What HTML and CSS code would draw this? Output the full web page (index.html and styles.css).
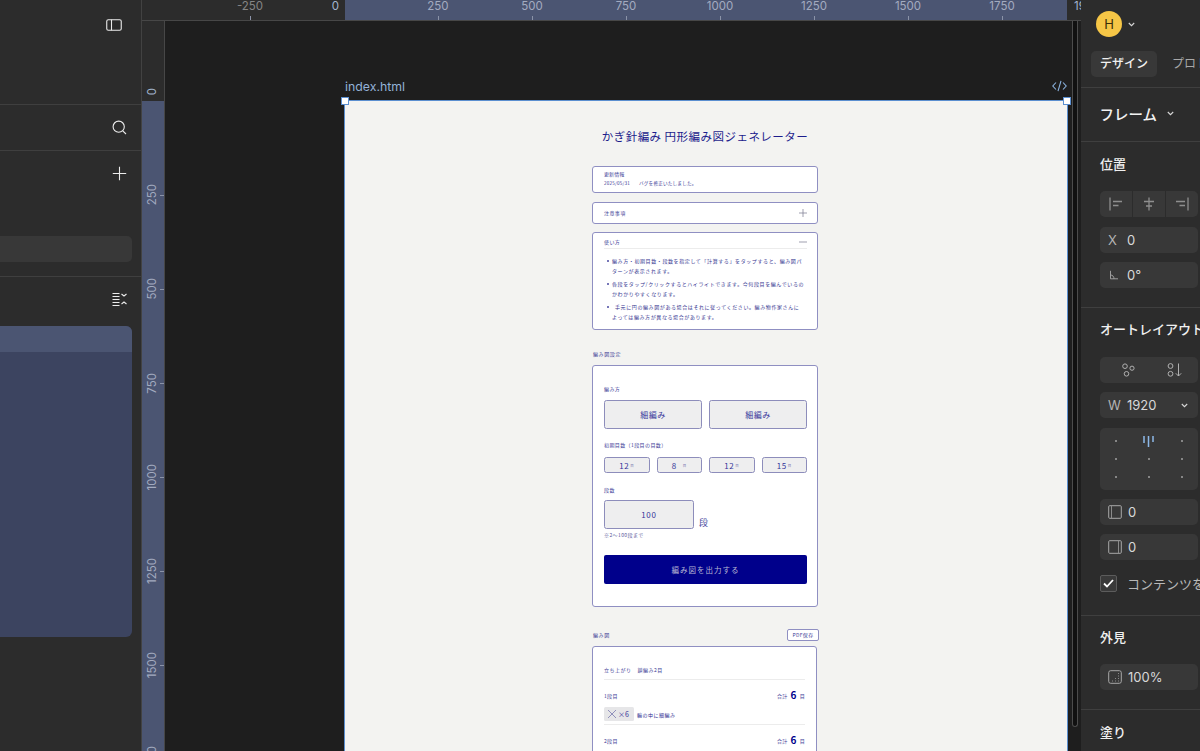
FILE: index.html
```html
<!DOCTYPE html>
<html lang="ja">
<head>
<meta charset="utf-8">
<title>index.html</title>
<link rel="stylesheet" href="styles.css">
</head>
<body>
<div class="app">
  <aside class="left">
    <section class="l-top">
      <svg class="ico ico-side" width="16" height="12" viewBox="0 0 16 12"><rect x=".75" y=".75" width="14.5" height="10.5" rx="1.6"/><path d="M5.5 .75v10.5"/></svg>
    </section>
    <section class="l-search">
      <svg class="ico" width="15" height="15" viewBox="0 0 15 15"><circle cx="6.7" cy="6.7" r="5.6"/><path d="M10.8 10.8l3.2 3.2"/></svg>
    </section>
    <section class="l-pages">
      <svg class="ico" width="15" height="15" viewBox="0 0 15 15"><path d="M7.5 .8v13.4M.8 7.5h13.4"/></svg>
      <div class="l-pagerow"></div>
    </section>
    <section class="l-layers">
      <div class="l-tool">
        <svg class="ico" width="15" height="15" viewBox="0 0 15 15"><path d="M.5 1.5h7M.5 4.5h7M.5 7.5h7M.5 10.5h7M.5 13.5h7M9.5 2l2.5 2 2.5-2M9.5 12l2.500-2 2.500 2"/></svg>
      </div>
      <div class="l-tree">
        <div class="l-tree-head"></div>
        <div class="l-tree-body"></div>
      </div>
    </section>
  </aside>

  <main class="center">
    <div class="h-ruler">
      <div class="h-band"></div>
      <div class="h-labels">
        <span class="hr-mark tick">-250</span>
        <span class="hr-zero">0</span>
        <span class="hr-mark hr-first tick">250</span>
        <span class="hr-mark tick">500</span>
        <span class="hr-mark tick">750</span>
        <span class="hr-mark tick">1000</span>
        <span class="hr-mark tick">1250</span>
        <span class="hr-mark tick">1500</span>
        <span class="hr-mark tick">1750</span>
        <span class="hr-last">1920</span>
      </div>
    </div>
    <div class="stage">
      <div class="v-ruler">
        <div class="v-band"></div>
        <div class="v-labels">
          <div class="vr-zero"><span>0</span></div>
          <div class="vr-mark vr-first"><span>250</span></div>
          <div class="vr-mark"><span>500</span></div>
          <div class="vr-mark"><span>750</span></div>
          <div class="vr-mark"><span>1000</span></div>
          <div class="vr-mark"><span>1250</span></div>
          <div class="vr-mark"><span>1500</span></div>
          <div class="vr-mark"><span>1750</span></div>
        </div>
      </div>
      <div class="canvas">
        <div class="frame-wrap">
          <div class="frame-label">
            <span>index.html</span>
            <svg class="code-ico" width="15" height="12" viewBox="0 0 15 12"><path d="M4 2.5L.8 6 4 9.5M11 2.5L14.2 6 11 9.5M9 .8L6 11.2"/></svg>
          </div>
          <div class="frame">
            <i class="handle h-tl"></i><i class="handle h-tr"></i>
            <div class="page">
              <h1 class="title">かぎ針編み 円形編み図ジェネレーター</h1>

              <div class="card c-news">
                <p class="tiny news-h">更新情報</p>
                <p class="tiny news-line"><span class="news-date">2025/05/31</span><span>バグを修正いたしました。</span></p>
              </div>

              <div class="card c-note">
                <span class="tiny">注意事項</span>
                <svg class="pm" width="8" height="8" viewBox="0 0 8 8"><path d="M4 0v8M0 4h8"/></svg>
              </div>

              <div class="card c-how">
                <div class="how-head">
                  <span class="tiny">使い方</span>
                  <svg class="pm" width="8" height="8" viewBox="0 0 8 8"><path d="M0 4h8"/></svg>
                </div>
                <ul class="how-list">
                  <li>編み方・初期目数・段数を指定して「計算する」をタップすると、編み図パターンが表示されます。</li>
                  <li>各段をタップ/クリックするとハイライトできます。今何段目を編んでいるのかわかりやすくなります。</li>
                  <li class="li-indent">手元に円の編み図がある場合はそれに従ってください。編み物作家さんによっては編み方が異なる場合があります。</li>
                </ul>
              </div>

              <h2 class="sec-label s-form">編み図設定</h2>
              <div class="card c-form">
                <p class="tiny f-label">編み方</p>
                <div class="two">
                  <div class="opt opt-big">細編み</div>
                  <div class="opt opt-big">細編み</div>
                </div>
                <p class="tiny f-label f-l2">初期目数（1段目の目数）</p>
                <div class="four">
                  <div class="opt opt-sm">12<small>目</small></div>
                  <div class="opt opt-sm">8<small class="wide">目</small></div>
                  <div class="opt opt-sm">12<small>目</small></div>
                  <div class="opt opt-sm">15<small>目</small></div>
                </div>
                <p class="tiny f-label f-l3">段数</p>
                <div class="rows">
                  <div class="opt opt-in">100</div>
                  <span class="rows-unit">段</span>
                </div>
                <p class="tiny f-hint">※2〜100段まで</p>
                <div class="go">編み図を出力する</div>
              </div>

              <div class="res-head">
                <h2 class="sec-label">編み図</h2>
                <span class="pdf">PDF保存</span>
              </div>
              <div class="card c-res">
                <div class="r-up"><span>立ち上がり</span><span>鎖編み2目</span></div>
                <div class="r-row">
                  <div class="r-top"><span class="r-n">1段目</span><span class="r-sum">合計<b>6</b>目</span></div>
                  <div class="r-body">
                    <span class="chip"><svg width="10" height="10" viewBox="0 0 10 10"><path d="M1 1l8 8M9 1l-8 8"/></svg>×6</span>
                    <span class="r-text">輪の中に細編み</span>
                  </div>
                </div>
                <div class="r-row">
                  <div class="r-top"><span class="r-n">2段目</span><span class="r-sum">合計<b>6</b>目</span></div>
                </div>
              </div>
            </div>
          </div>
        </div>
        <div class="scrollbar"></div>
      </div>
    </div>
  </main>

  <aside class="right">
    <section class="r-sec rs-user">
      <span class="avatar">H</span>
      <svg class="chev" width="7" height="5" viewBox="0 0 7 5"><path d="M.8 1l2.700 2.700L6.200 1"/></svg>
    </section>
    <section class="r-sec rs-tabs">
      <span class="tab on">デザイン</span>
      <span class="tab">プロトタイプ</span>
    </section>
    <section class="r-sec rs-frame">
      <span class="frame-name">フレーム</span>
      <svg class="chev" width="7" height="5" viewBox="0 0 7 5"><path d="M.8 1l2.700 2.700L6.200 1"/></svg>
    </section>
    <section class="r-sec rs-pos">
      <h3 class="r-h">位置</h3>
      <div class="seg aligns">
        <span class="seg-c"><svg width="16" height="16" viewBox="0 0 16 16"><path d="M2 1.500v13M5 5.500h9M5 9.500h5.500"/></svg></span>
        <span class="seg-c"><svg width="16" height="16" viewBox="0 0 16 16"><path d="M8 1.500v13M3 5.500h10M5 10h6"/></svg></span>
        <span class="seg-c"><svg width="16" height="16" viewBox="0 0 16 16"><path d="M14 1.500v13M2 5.500h9M5.500 9.500H11"/></svg></span>
      </div>
      <div class="field"><span class="f-k">X</span><span>0</span></div>
      <div class="field"><svg class="f-ico" width="10" height="10" viewBox="0 0 10 10"><path d="M1.500 .8v8h7.500M1.500 5c2 0 3.500 1.500 3.500 3.800"/></svg><span>0°</span></div>
    </section>
    <section class="r-sec rs-auto">
      <h3 class="r-h">オートレイアウト</h3>
      <div class="seg auto-modes">
        <span class="seg-c"><svg width="16" height="14" viewBox="0 0 16 14"><circle cx="5" cy="3.200" r="2.300"/><circle cx="12" cy="5.200" r="2.100"/><circle cx="6.500" cy="10.800" r="2.300"/></svg></span>
        <span class="seg-c"><svg width="16" height="14" viewBox="0 0 16 14"><circle cx="3.500" cy="3" r="2.400"/><circle cx="3.500" cy="10.800" r="2.400"/><path d="M11.500 .5v12.500M8.800 10.300l2.700 2.700 2.700-2.700"/></svg></span>
      </div>
      <div class="field f-w"><span class="f-k">W</span><span class="f-v">1920</span><svg class="chev" width="7" height="5" viewBox="0 0 7 5"><path d="M.8 1l2.700 2.700L6.200 1"/></svg></div>
      <div class="align-grid">
        <i></i>
        <svg class="ag-on" width="13" height="13" viewBox="0 0 13 13"><path d="M2 1v7M6.500 1v11M11 1v6"/></svg>
        <i></i><i></i><i></i><i></i><i></i><i></i><i></i>
      </div>
      <div class="field f-side"><svg class="f-box" width="14" height="14" viewBox="0 0 14 14"><rect x=".7" y=".7" width="12.600" height="12.600" rx="1"/><path class="dim" d="M3.500 1v12"/></svg><span>0</span></div>
      <div class="field f-side"><svg class="f-box" width="14" height="14" viewBox="0 0 14 14"><rect x=".7" y=".7" width="12.600" height="12.600" rx="1"/><path class="dim" d="M10.500 1v12"/></svg><span>0</span></div>
      <div class="check-row">
        <span class="check"><svg width="11" height="9" viewBox="0 0 11 9"><path d="M1 4.500l3 3L10 1"/></svg></span>
        <span class="check-t">コンテンツをクリップ</span>
      </div>
    </section>
    <section class="r-sec rs-look">
      <h3 class="r-h">外見</h3>
      <div class="field"><svg class="f-box" width="14" height="14" viewBox="0 0 14 14"><rect x=".7" y=".7" width="12.600" height="12.600" rx="2"/><path class="dim" d="M4 11h1M7 11h1M10 11h1M7 8.500h1M10 8.500h1M10 6h1M10 3.500h1"/></svg><span>100%</span></div>
    </section>
    <section class="r-sec rs-fill">
      <h3 class="r-h">塗り</h3>
    </section>
  </aside>
</div>
</body>
</html>
```

FILE: styles.css
```css
* { box-sizing: border-box; margin: 0; padding: 0; }
html, body { height: 100%; overflow: hidden; }
body {
  width: 1200px;
  height: 751px;
  background: #1e1e1e;
  font-family: Inter, "Noto Sans CJK JP", sans-serif;
  color: #e6e6e6;
}
.app { display: flex; width: 1200px; height: 751px; overflow: hidden; }
svg { display: block; fill: none; }

/* Left panel */
.left { width: 142px; flex: none; background: #2c2c2c; border-right: 1px solid #424242; display: flex; flex-direction: column; }
.left section { display: flex; flex-direction: column; align-items: flex-end; border-bottom: 1px solid #3f3f3f; padding-right: 14px; }
.ico { stroke: #ececec; stroke-width: 1.100; }
.l-top { height: 105px; padding-top: 19px; }
.l-top .ico-side { margin-right: 5px; }
.l-search { height: 46px; padding-top: 15px; }
.l-pages { height: 126px; padding-top: 15px; }
.l-pagerow { width: 132px; height: 26px; margin-top: 55px; margin-right: -5px; background: #383838; border-radius: 0 5px 5px 0; }
.left .l-layers { flex: 1; border-bottom: 0; padding-top: 15px; }
.l-tool { height: 34px; }
.l-tree { width: 132px; height: 311px; margin-right: -5px; border-radius: 0 6px 6px 0; overflow: hidden; background: #3c4460; }
.l-tree-head { height: 26px; background: #4b5572; }
.l-tree-body { height: 285px; }

/* Center */
.center { width: 939px; flex: none; display: flex; flex-direction: column; overflow: hidden; }
.h-ruler { height: 21px; flex: none; position: relative; background: #2c2c2c; border-bottom: 1px solid #474747; overflow: hidden; }
.h-band { position: absolute; left: 203px; width: 722px; top: 0; bottom: 0; background: #4b5572; }
.h-labels { position: relative; display: flex; height: 20px; padding-left: 61px; font-size: 11.500px; line-height: 12px; color: #8f8f8f; white-space: nowrap; }
.h-labels span { flex: none; }
.hr-mark { width: 94px; text-align: center; position: relative; color: #a3abc0; }
.hr-mark:first-child { color: #858585; }
.hr-zero { width: 48px; padding-right: 6px; text-align: right; color: #a3b6cf; }
.hr-first { margin-left: 46px; }
.hr-last { margin-left: 25px; color: #a3b6cf; }
.tick::after { content: ""; position: absolute; left: 47px; top: 16px; width: 1px; height: 4px; background: #8b93a8; }

.stage { flex: 1; display: flex; min-height: 0; }
.v-ruler { width: 23px; flex: none; position: relative; background: #2c2c2c; border-right: 1px solid #474747; overflow: hidden; }
.v-band { position: absolute; left: 0; right: 0; top: 80px; bottom: 0; background: #4b5572; }
.v-labels { position: relative; display: flex; flex-direction: column; font-size: 11.500px; color: #a3abc0; }
.vr-zero { height: 79px; display: flex; flex-direction: column; justify-content: flex-end; align-items: center; width: 19px; padding-bottom: 5px; color: #a3b6cf; flex: none; }
.vr-zero span, .vr-mark span { writing-mode: vertical-rl; transform: rotate(180deg); line-height: 12px; }
.vr-mark { height: 94px; flex: none; width: 19px; display: flex; align-items: center; justify-content: center; position: relative; }
.vr-mark::after { content: ""; position: absolute; left: 18px; top: 47px; width: 4px; height: 1px; background: #8b93a8; }
.vr-first { margin-top: 48px; }

.canvas { flex: 1; position: relative; background: #1e1e1e; overflow: hidden; }
.frame-wrap { margin-left: 180px; padding-top: 58px; width: 722px; }
.frame-label { height: 22px; display: flex; justify-content: space-between; align-items: flex-start; font-size: 12.300px; line-height: 15px; color: #93b2d8; }
.code-ico { stroke: #8cb4e0; stroke-width: 1.100; margin-top: 1px; }
.frame { position: relative; width: 722px; height: 680px; background: #f3f3f1; box-shadow: 0 0 0 1px #5b8fd0; }
.handle { position: absolute; width: 8px; height: 8px; background: #fff; border: 1px solid #5b8fd0; top: -4px; }
.h-tl { left: -4px; }
.h-tr { right: -4px; }
.scrollbar { position: absolute; left: 907px; top: 0; width: 6px; height: 706px; background: #111; border: 1px solid #4c4c4c; border-top: 0; border-radius: 0 0 3px 3px; }

/* Page */
.page { width: 226px; margin-left: 247px; color: #26268f; font-family: "Noto Sans CJK JP", sans-serif; }
.title { font-size: 11.500px; line-height: 16px; font-weight: 400; text-align: center; letter-spacing: .47px; padding-top: 27px; margin-bottom: 22px; color: #1c1c8c; }
.card { background: #fff; border: 1px solid #8f8fc2; border-radius: 3px; }
.tiny { font-size: 5px; line-height: 8px; letter-spacing: .4px; color: #3a3a95; display: block; }
.c-news { height: 27px; padding: 3px 11px 0; margin-bottom: 9px; }
.news-h { letter-spacing: .1px; }
.news-line { margin-top: 1px; display: flex; gap: 9px; font-size: 4.600px; letter-spacing: .2px; }
.c-note { height: 22px; padding: 0 10px 1px 11px; margin-bottom: 8px; display: flex; justify-content: space-between; align-items: center; }
.pm { stroke: #77778c; stroke-width: .7; }
.c-how { height: 98px; padding: 4px 10px 0 11px; }
.how-head { display: flex; justify-content: space-between; align-items: center; height: 12px; border-bottom: 1px solid #ececec; padding-bottom: 2px; }
.how-list { list-style: none; margin-top: 7px; font-size: 5px; line-height: 10px; letter-spacing: .6px; color: #34348f; }
.how-list li { position: relative; padding-left: 8px; margin-bottom: 3px; }
.how-list li::before { content: ""; position: absolute; left: 3px; top: 4px; width: 2px; height: 2px; background: #4a4aa0; border-radius: 50%; }
.how-list .li-indent { text-indent: 3px; padding-right: 7px; }

.sec-label { font-size: 5px; line-height: 8px; letter-spacing: .6px; font-weight: 400; color: #3a3a95; }
.s-form { margin-top: 20px; margin-bottom: 7px; padding-left: 1px; }
.c-form { height: 242px; padding: 19px 10px 0 11px; }
.f-label { margin-bottom: 7px; }
.two { display: flex; gap: 7px; }
.four { display: flex; gap: 7px; }
.opt { background: #eeeeef; border: 1px solid #8d8dbb; border-radius: 2.500px; display: flex; align-items: center; justify-content: center; color: #35359a; }
.opt-big { flex: 1; height: 29px; font-size: 8px; letter-spacing: .5px; }
.f-l2 { margin-top: 12px; margin-bottom: 8px; }
.opt-sm { flex: 1; height: 16px; font-size: 8px; letter-spacing: .5px; }
.opt-sm small { font-size: 3.500px; margin-left: 1px; color: #7a7ab0; }
.opt-sm small.wide { margin-left: 6px; }
.f-l3 { margin-top: 13px; margin-bottom: 6px; }
.rows { display: flex; align-items: flex-end; gap: 5px; }
.opt-in { width: 90px; height: 29px; font-size: 8px; letter-spacing: .8px; }
.rows-unit { font-size: 9px; line-height: 13px; color: #4c4ca0; }
.f-hint { margin-top: 2px; color: #5a5a9a; }
.go { height: 29px; margin-top: 16px; padding-bottom: 1px; background: #00008b; border-radius: 2px; display: flex; align-items: center; justify-content: center; font-size: 7.500px; letter-spacing: 1px; color: #b9b9d4; }

.res-head { display: flex; justify-content: space-between; align-items: center; height: 12px; margin-top: 22px; margin-bottom: 5px; padding-left: 1px; }
.pdf { font-size: 5px; line-height: 9px; letter-spacing: .3px; width: 32px; height: 12px; text-align: center; background: #fff; border: 1px solid #8f8fc2; border-radius: 2px; margin-right: -1px; color: #3a3a95; }
.c-res { width: 225px; height: 200px; padding: 0 11px; }
.r-up { display: flex; gap: 6px; height: 33px; padding-top: 19px; border-bottom: 1px solid #ececec; font-size: 5px; line-height: 8px; letter-spacing: .5px; color: #3a3a95; }
.r-row { border-bottom: 1px solid #ececec; height: 45px; padding-top: 9px; }
.r-top { display: flex; justify-content: space-between; align-items: center; height: 12px; font-size: 5px; letter-spacing: .3px; color: #3a3a95; }
.r-sum { display: flex; align-items: center; gap: 3px; }
.r-sum b { font-size: 10px; line-height: 10px; font-weight: 700; color: #00008b; }
.r-body { display: flex; align-items: center; gap: 3px; margin-top: 6px; }
.chip { display: flex; align-items: center; gap: 1px; height: 14px; width: 30px; padding-left: 3px; background: #e6e6e8; border-radius: 1.500px; font-size: 7px; color: #35359a; }
.chip svg { stroke: #6a6aa8; stroke-width: .7; }
.r-text { font-size: 5px; letter-spacing: .5px; color: #2a2a8f; }

/* Right panel */
.right { width: 119px; flex: none; background: #2c2c2c; color: #e8e8e8; overflow: hidden; }
.r-sec { padding-left: 19px; border-bottom: 1px solid #3f3f3f; width: 140px; }
.chev { stroke: #d8d8d8; stroke-width: 1.100; }
.rs-user { height: 51px; display: flex; align-items: center; gap: 6px; padding: 0 0 3px 15px; border: 0; }
.avatar { width: 26px; height: 26px; border-radius: 50%; background: #f6c646; color: #3a2d08; display: flex; align-items: center; justify-content: center; font-size: 13px; }
.rs-tabs { height: 37px; display: flex; gap: 6px; padding: 0 0 0 10px; white-space: nowrap; }
.tab { height: 26px; padding: 0 9px; font-size: 12px; line-height: 26px; color: #a8a8a8; border-radius: 5px; }
.tab.on { background: #383838; color: #f0f0f0; font-weight: 500; }
.rs-frame { height: 54px; display: flex; align-items: center; gap: 10px; padding-bottom: 2px; padding-left: 18.500px; }
.frame-name { font-size: 14.500px; font-weight: 500; color: #f2f2f2; }
.r-h { font-size: 13px; line-height: 18px; font-weight: 500; color: #f0f0f0; white-space: nowrap; }
.rs-pos { height: 166px; padding-top: 13px; }
.seg { display: flex; width: 98px; height: 26px; background: #383838; border-radius: 5px; overflow: hidden; }
.seg-c { flex: 1; display: flex; align-items: center; justify-content: center; }
.seg svg { stroke: #8e8e8e; stroke-width: 1.300; }
.aligns { margin-top: 18px; gap: 1px; background: #2c2c2c; }
.aligns .seg-c { background: #383838; }
.field { display: flex; align-items: center; width: 98px; height: 26px; margin-top: 10px; padding-left: 8px; background: #383838; border-radius: 5px; font-size: 13px; color: #d8d8d8; white-space: nowrap; }
.f-k { width: 19px; color: #b4b4b4; font-size: 13px; }
.f-ico { stroke: #a8a8a8; stroke-width: .9; margin-left: 1px; margin-right: 8px; }
.rs-pos .field { margin-top: 9.500px; }
.rs-auto { height: 308px; padding-top: 12px; }
.auto-modes { margin-top: 19px; padding-left: 4px; }
.auto-modes svg { stroke: #b0b0b0; stroke-width: 1; }
.f-w { margin-top: 9px; padding-right: 10px; }
.f-w .f-k { width: 19px; }
.f-w .f-v { flex: 1; }
.align-grid { width: 98px; height: 62px; margin-top: 10px; background: #383838; border-radius: 5px; display: grid; grid-template-columns: repeat(3, 1fr); grid-template-rows: repeat(3, 1fr); align-items: center; justify-items: center; padding: 4px 0; }
.align-grid i { width: 2px; height: 2px; background: #a0a0a0; border-radius: 50%; }
.ag-on { stroke: #8cb8e8; stroke-width: 1.500; }
.f-box { stroke: #a8a8a8; stroke-width: 1; margin-right: 6px; flex: none; }
.f-box .dim { stroke: #8a8a8a; }
.f-side { margin-top: 9px; }
.check-row { display: flex; align-items: center; gap: 10px; margin-top: 14px; white-space: nowrap; }
.check { width: 17px; height: 17px; flex: none; border: 1px solid #5c5c5c; border-radius: 2px; background: #3a3a3a; display: flex; align-items: center; justify-content: center; }
.check svg { stroke: #fff; stroke-width: 1.800; }
.check-t { font-size: 13px; color: #b8b8b8; }
.rs-look { height: 94px; padding-top: 12px; }
.rs-look .field { margin-top: 18px; }
.rs-fill { height: 42px; padding-top: 13px; border: 0; }
```
